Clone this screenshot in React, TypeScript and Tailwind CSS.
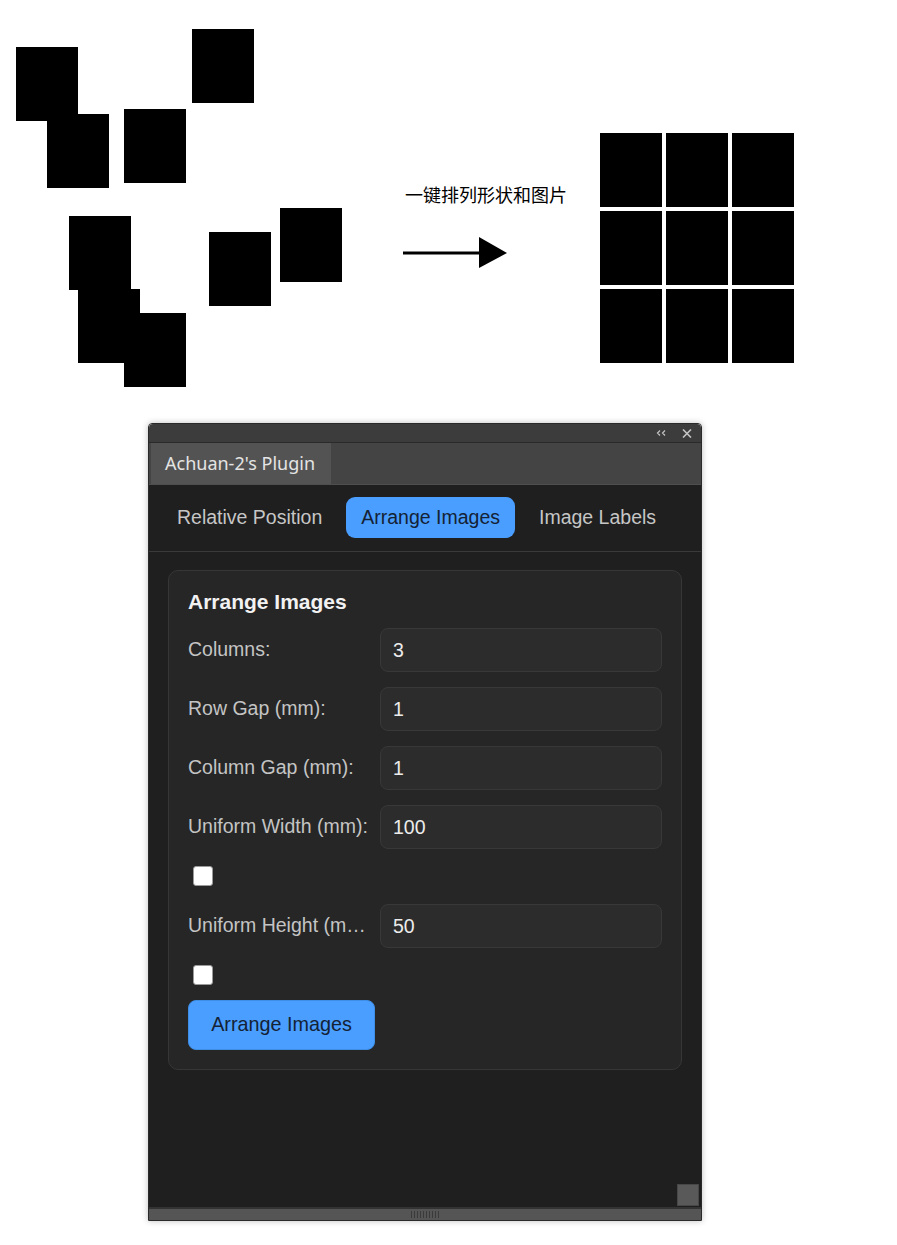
import { useState } from 'react';

const scattered = [
    { x: 16, y: 47 },
    { x: 47, y: 114 },
    { x: 124, y: 109 },
    { x: 192, y: 29 },
    { x: 69, y: 216 },
    { x: 78, y: 289 },
    { x: 124, y: 313 },
    { x: 209, y: 232 },
    { x: 280, y: 208 },
];

const fields = [
    { label: 'Columns:', value: '3' },
    { label: 'Row Gap (mm):', value: '1' },
    { label: 'Column Gap (mm):', value: '1' },
];

const Field = ({ label, value, className = 'mb-[15px]' }) => (
    <div className={`grid grid-cols-[180px_1fr] gap-x-[12px] items-center ${className}`}>
        <label className="text-[19.5px] text-[#c4c4c4] truncate">{label}</label>
        <input
            type="text"
            defaultValue={value}
            className="h-[44px] w-full px-[12px] rounded-[8px] bg-[#2c2c2c] border border-[#383838] text-[19.5px] text-[#ececec] outline-none"
        />
    </div>
);

const Check = ({ className }) => (
    <div className={`h-[20px] pl-[5px] ${className}`}>
        <input type="checkbox" className="appearance-none block w-[20px] h-[20px] bg-white rounded-[3px] border border-[#9a9a9a]" />
    </div>
);

const App = () => {
    const [tab, setTab] = useState('Arrange Images');
    const tabs = ['Relative Position', 'Arrange Images', 'Image Labels'];

    return (
        <div className="w-[897px] h-[1245px] bg-white overflow-hidden" style={{ fontFamily: '"Liberation Sans", Arial, sans-serif' }}>
            {/* diagram */}
            <div className="flex h-[400px]">
                <div className="relative w-[380px] h-full">
                    {scattered.map((r, i) => (
                        <div key={i} className="absolute w-[62px] h-[74px] bg-black" style={{ left: r.x, top: r.y }} />
                    ))}
                </div>
                <div className="ml-[23px] pt-[183px] w-[180px]">
                    <div className="text-[18px] leading-[22px] text-black pl-[2px]" style={{ fontFamily: '"Noto Sans CJK SC", sans-serif' }}>一键排列形状和图片</div>
                    <svg width="106" height="32" viewBox="0 0 106 32" className="mt-[32px]">
                        <line x1="0" y1="16" x2="78" y2="16" stroke="black" strokeWidth="3" />
                        <polygon points="76,0 104,16 76,31" fill="black" />
                    </svg>
                </div>
                <div className="ml-[17px] mt-[133px] grid grid-cols-[62px_62px_62px] grid-rows-[74px_74px_74px] gap-x-[4px] gap-y-[4px] h-fit">
                    {Array.from({ length: 9 }).map((_, i) => (
                        <div key={i} className="bg-black" />
                    ))}
                </div>
            </div>

            {/* plugin panel */}
            <div className="ml-[148px] mt-[23px] w-[554px] h-[798px] flex flex-col border border-[#2a2a2a] rounded-t-[4px] shadow-[0_0_6px_rgba(0,0,0,0.25)] relative">
                <div className="h-[19px] bg-[#3c3c3c] rounded-t-[4px] border-b border-[#2a2a2a] flex items-center justify-end pr-[9px] gap-[16px]">
                    <svg width="10" height="6" viewBox="0 0 10 6">
                        <path d="M4 0.5 L1.5 3 L4 5.5 M9 0.5 L6.5 3 L9 5.5" stroke="#c4c4c4" strokeWidth="1.2" fill="none" />
                    </svg>
                    <svg width="10" height="9" viewBox="0 0 10 9">
                        <path d="M1 0.5 L9 8.5 M9 0.5 L1 8.5" stroke="#c4c4c4" strokeWidth="1.6" />
                    </svg>
                </div>
                <div className="h-[42px] bg-[#444444] flex border-b border-[#4e4e4e]">
                    <div className="w-[180px] ml-[2px] bg-[#535353] flex items-center pl-[14px] text-[18px] text-[#e4e4e4]" style={{ fontFamily: '"Noto Sans", "Open Sans", sans-serif' }}>
                        Achuan-2's Plugin
                    </div>
                </div>
                <div className="flex-1 bg-[#1f1f1f] flex flex-col relative">
                    <div className="flex gap-[8px] pl-[12px] pt-[12px] pb-[13px] border-b border-[#3a3a3a]">
                        {tabs.map((t) => (
                            <button
                                key={t}
                                onClick={() => setTab(t)}
                                className={`h-[41px] rounded-[9px] text-[19.5px] ${tab === t ? 'bg-[#4a9eff] text-[#142235] px-[15px]' : 'text-[#c6c6c6] px-[16px]'}`}
                            >
                                {t}
                            </button>
                        ))}
                    </div>
                    <div className="mt-[18px] mx-[19px] rounded-[10px] border border-[#363636] bg-[#262626] p-[19px]">
                        <div className="text-[21px] font-bold text-[#f2f2f2] leading-[24px] mb-[14px]">Arrange Images</div>
                        {fields.map((f) => (
                            <Field key={f.label} label={f.label} value={f.value} />
                        ))}
                        <Field label="Uniform Width (mm):" value="100" className="mb-[17px]" />
                        <Check className="mb-[18px]" />
                        <Field label="Uniform Height (mm):" value="50" className="mb-[17px]" />
                        <Check className="mb-[15px]" />
                        <button className="h-[50px] w-[187px] rounded-[8px] bg-[#4a9eff] border border-[#3f8ee6] text-[19.8px] text-[#142235]">
                            Arrange Images
                        </button>
                    </div>
                    <div className="absolute right-[2px] bottom-[1px] w-[22px] h-[22px] bg-[#595959] border border-[#474747]" />
                </div>
                <div className="h-[13px] bg-[#555555] border-t-2 border-[#333333] flex justify-center items-center">
                    <div className="flex gap-[2px]">
                        {Array.from({ length: 10 }).map((_, i) => (
                            <div key={i} className="w-[1px] h-[7px] bg-[#3a3a3a]" />
                        ))}
                    </div>
                </div>
            </div>
        </div>
    );
};

export default App;
